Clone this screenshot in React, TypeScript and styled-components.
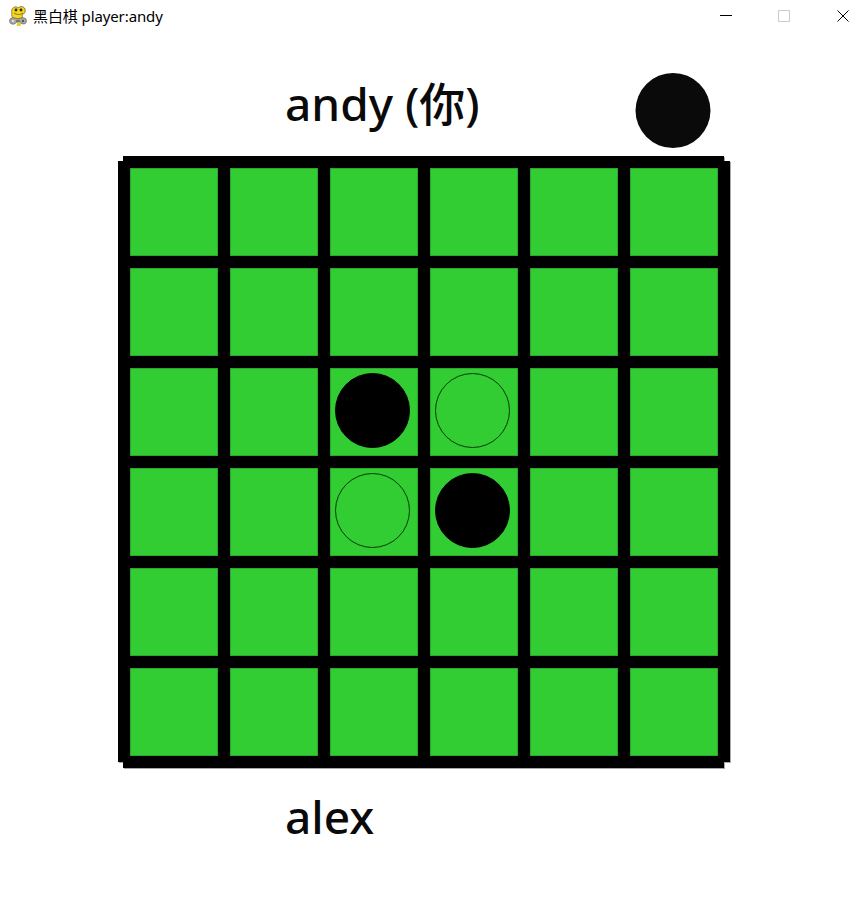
import * as React from 'react';
import styled, { createGlobalStyle } from 'styled-components';

type Piece = 'black' | 'white' | null;

const GlobalStyle = createGlobalStyle`
  html, body {
    margin: 0;
    padding: 0;
    background: #ffffff;
  }
`;

const Window = styled.div`
  display: flex;
  flex-direction: column;
  width: 868px;
  height: 911px;
  overflow: hidden;
  background: #ffffff;
  font-family: "Noto Sans", "Noto Sans CJK SC", sans-serif;
  color: #0a0a0a;
`;

const TitleBar = styled.div`
  display: flex;
  align-items: center;
  height: 32px;
  padding: 0 19px 0 9px;
  flex: none;
`;

const AppIcon = styled.svg`
  width: 18px;
  height: 20px;
  flex: none;
  margin-top: -1px;
`;

const TitleText = styled.span`
  margin-left: 6px;
  font-size: 15px;
  line-height: 20px;
  color: #000000;
  letter-spacing: -0.1px;
`;

const Controls = styled.div`
  display: flex;
  align-items: center;
  gap: 46px;
  margin-left: auto;
`;

const ControlIcon = styled.svg<{ $wideGap?: boolean }>`
  display: block;
  width: 12px;
  height: 12px;
  margin-right: ${props => (props.$wideGap ? '1px' : '0')};
`;

const Header = styled.div`
  display: flex;
  align-items: center;
  justify-content: space-between;
  height: 124px;
  padding: 24px 157px 0 285px;
  box-sizing: border-box;
  flex: none;
`;

const PlayerName = styled.div`
  font-size: 46px;
  line-height: 60px;
  font-weight: 500;
`;

const TopName = styled(PlayerName)`
  margin-top: -6px;
`;

const TurnDisc = styled.div`
  width: 75px;
  height: 75px;
  margin: 8px 0 0;
  border-radius: 50%;
  background: #0a0a0a;
  transform: translateX(-0.5px);
`;

const BoardRow = styled.div`
  padding-left: 118px;
  flex: none;
`;

const BoardEdge = styled.div`
  width: 612px;
  filter: drop-shadow(1px 1px 0 #a8a8a8);
`;

const Board = styled.div`
  display: grid;
  grid-template-columns: repeat(6, 88px);
  grid-auto-rows: 88px;
  gap: 12px;
  padding: 12px;
  background: #000000;
  clip-path: polygon(
    5px 0, 606px 0, 606px 5px, 612px 5px, 612px 606px, 606px 606px,
    606px 612px, 5px 612px, 5px 606px, 0 606px, 0 5px, 5px 5px
  );
`;

const Cell = styled.div`
  box-sizing: border-box;
  padding: 5px 0 0 5px;
  background: #32cd32;
  box-shadow: inset 0 0 0 1px #2ba82b;
`;

const Disc = styled.div<{ $piece: 'black' | 'white' }>`
  box-sizing: border-box;
  width: 75px;
  height: 75px;
  border-radius: 50%;
  background: ${props => (props.$piece === 'black' ? '#000000' : '#32cd32')};
  border: 1px solid ${props => (props.$piece === 'black' ? '#000000' : '#0a3a0a')};
`;

const Footer = styled.div`
  padding: 18px 0 0 285px;
`;

const layout: Piece[][] = [
  [null, null, null, null, null, null],
  [null, null, null, null, null, null],
  [null, null, 'black', 'white', null, null],
  [null, null, 'white', 'black', null, null],
  [null, null, null, null, null, null],
  [null, null, null, null, null, null],
];

const SnakeIcon = () => (
  <AppIcon viewBox="0 0 18 20">
    <path d="M4 2 C6 0 8 1 9 2 C11 0 15 0 16 3 C17 6 15 8 13 9 C14 11 13 13 11 13 L6 13 C3 12 2 9 3 7 C2 5 3 3 4 2 Z" fill="#f3d523" stroke="#7d6a14" strokeWidth="0.8" />
    <circle cx="7" cy="4" r="1.4" fill="#2b2b1a" />
    <circle cx="12" cy="4" r="1.4" fill="#2b2b1a" />
    <path d="M5 7 C8 9 11 9 14 7" fill="none" stroke="#7d6a14" strokeWidth="0.9" />
    <path d="M1 13 C3 11 7 12 9 13 C11 12 15 11 17 13 C18 15 17 18 15 18 C12 18 11 16 9 16 C7 16 6 19 3 18 C1 18 0 15 1 13 Z" fill="#a9a9a0" stroke="#5f5f58" strokeWidth="0.7" />
    <circle cx="4" cy="15" r="1" fill="#f4f4ee" />
    <circle cx="14" cy="15" r="1" fill="#3a3a36" />
    <path d="M7 15 L11 15" stroke="#55534a" strokeWidth="1" />
    <path d="M10 16 C12 17 13 19 11 20 L8 20 C7 19 8 17 10 16 Z" fill="#e9cd28" />
  </AppIcon>
);

export default function App() {
  return (
    <Window>
      <GlobalStyle />
      <TitleBar>
        <SnakeIcon />
        <TitleText>黑白棋 player:andy</TitleText>
        <Controls>
          <ControlIcon viewBox="0 0 12 12">
            <path d="M0 5.5 H12" stroke="#000000" strokeWidth="1" />
          </ControlIcon>
          <ControlIcon viewBox="0 0 12 12" $wideGap>
            <rect x="0.5" y="0.5" width="11" height="11" fill="none" stroke="#cccccc" strokeWidth="1" />
          </ControlIcon>
          <ControlIcon viewBox="0 0 12 12">
            <path d="M0.5 0.5 L11.5 11.5 M11.5 0.5 L0.5 11.5" stroke="#000000" strokeWidth="1" />
          </ControlIcon>
        </Controls>
      </TitleBar>
      <Header>
        <TopName>andy (你)</TopName>
        <TurnDisc />
      </Header>
      <BoardRow>
        <BoardEdge>
          <Board>
            {layout.flatMap((row, y) =>
              row.map((piece, x) => (
                <Cell key={`${x}-${y}`}>{piece && <Disc $piece={piece} />}</Cell>
              ))
            )}
          </Board>
        </BoardEdge>
      </BoardRow>
      <Footer>
        <PlayerName>alex</PlayerName>
      </Footer>
    </Window>
  );
}
